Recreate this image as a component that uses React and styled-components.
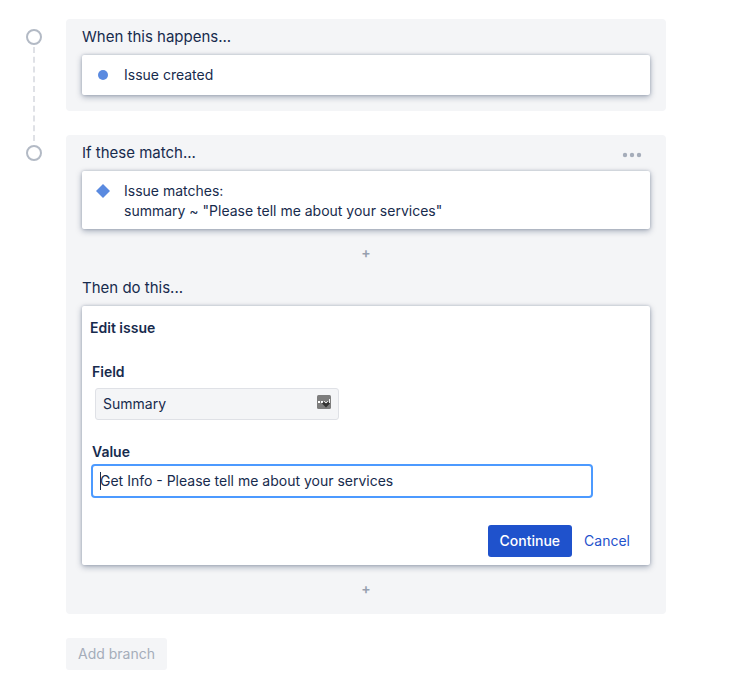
import React, { useState } from "react";
import styled, { createGlobalStyle, css } from "styled-components";

const GlobalStyle = createGlobalStyle`
  * {
    box-sizing: border-box;
  }
  body {
    margin: 0;
    background: #fff;
    color: #172b4d;
    font-family: Inter, "Liberation Sans", sans-serif;
    font-size: 14px;
    line-height: 20px;
  }
  button,
  input,
  select {
    font: inherit;
    color: inherit;
  }
`;

const Page = styled.main`
  padding: 19px 74px 15px 26px;
`;

const Step = styled.section`
  display: flex;
  gap: 24px;
  padding-bottom: 24px;
`;

const Rail = styled.div`
  width: 16px;
  flex: none;
  display: flex;
  flex-direction: column;
  align-items: center;
  gap: 2px;
  padding-top: 10px;
`;

const Marker = styled.span`
  width: 16px;
  height: 16px;
  border: 2px solid #b3bac5;
  border-radius: 50%;
`;

/* runs over the gap below the step, up to the next marker */
const Connector = styled.span`
  flex: 1;
  margin-bottom: -30px;
  border-left: 2px dashed #dfe1e6;
`;

const Panel = styled.div`
  flex: 1;
  min-width: 0;
  padding: 8px 16px 16px;
  background: #f4f5f7;
  border-radius: 4px;
  ${({ $open }) =>
    $open &&
    css`
      padding-bottom: 0;
    `}
`;

const PanelHeader = styled.header`
  display: flex;
  align-items: center;
  justify-content: space-between;
  margin-bottom: 8px;
`;

const PanelTitle = styled.h2`
  margin: 0;
  font-size: 15px;
  line-height: 20px;
  font-weight: 400;
`;

const MoreButton = styled.button`
  display: flex;
  height: 20px;
  padding: 4px 8px 0;
  border: 0;
  background: none;
  cursor: pointer;
`;

const Card = styled.div`
  background: #fff;
  border-radius: 2px;
  box-shadow: 0 2px 6px rgba(9, 30, 66, 0.34), 0 0 3px rgba(9, 30, 66, 0.2);
`;

const RuleCard = styled(Card)`
  display: flex;
  gap: 14px;
  min-height: 40px;
  padding: 10px 14px 8px;
  p {
    margin: 0;
  }
  svg {
    flex: none;
    margin-top: 3px;
  }
`;

const AddButton = styled.button`
  display: block;
  width: 24px;
  height: 24px;
  margin: 14px auto 11px;
  padding: 0 0 4px;
  border: 0;
  background: none;
  color: #97a0af;
  font-weight: 600;
  cursor: pointer;
`;

const FormCard = styled(Card)`
  padding: 12px 8px 8px;
`;

const FormTitle = styled.h3`
  margin: 0 0 24px;
  font-size: 14px;
  line-height: 20px;
  font-weight: 600;
`;

const Label = styled.label`
  display: block;
  margin-left: 2px;
  font-weight: 600;
`;

const SelectBox = styled.div`
  position: relative;
  width: 244px;
  max-width: 100%;
  margin: 6px 0 22px 5px;
  svg {
    position: absolute;
    top: 7px;
    right: 8px;
    pointer-events: none;
  }
`;

const Select = styled.select`
  display: block;
  width: 100%;
  height: 32px;
  padding: 0 32px 0 7px;
  border: 1px solid #dfe1e6;
  border-radius: 3px;
  background: #f4f5f7;
  appearance: none;
`;

const InputBox = styled.div`
  position: relative;
  margin: 2px 49px 27px 1px;
  &::before {
    content: "";
    position: absolute;
    top: 8px;
    left: 9px;
    width: 1px;
    height: 18px;
    background: #172b4d;
  }
`;

const Input = styled.input`
  display: block;
  width: 100%;
  height: 34px;
  padding: 0 7px 2px;
  border: 2px solid #4c9aff;
  border-radius: 4px;
  background: #fff;
  outline: none;
  caret-color: transparent;
`;

const Actions = styled.div`
  display: flex;
  justify-content: flex-end;
`;

const Button = styled.button`
  height: 32px;
  padding: 0 12px;
  border: 0;
  border-radius: 3px;
  background: #f4f5f7;
  color: #a5adba;
  cursor: pointer;
  ${({ $variant }) =>
    $variant === "primary" &&
    css`
      background: #1f52cc;
      color: #fff;
      font-weight: 500;
    `}
  ${({ $variant }) =>
    $variant === "link" &&
    css`
      background: none;
      color: #1f52cc;
    `}
`;

const BranchRow = styled.div`
  padding-left: 40px;
`;

function DotIcon() {
  return (
    <svg width="14" height="14" viewBox="0 0 14 14">
      <circle cx="7" cy="7" r="5" fill="#5a8ae0" />
    </svg>
  );
}

function DiamondIcon() {
  return (
    <svg width="14" height="14" viewBox="0 0 14 14">
      <path d="M7 0l7 7-7 7-7-7z" fill="#5a8ae0" />
    </svg>
  );
}

function MoreIcon() {
  return (
    <svg width="20" height="16" viewBox="0 0 20 16" fill="#a5adba">
      <circle cx="3" cy="8" r="2.2" />
      <circle cx="10" cy="8" r="2.2" />
      <circle cx="17" cy="8" r="2.2" />
    </svg>
  );
}

function PickerIcon() {
  return (
    <svg width="14" height="14" viewBox="0 0 14 14">
      <rect width="14" height="14" rx="1.5" fill="#7d7d7d" />
      <path d="M1 6h2v2H1zM4 6h2v2H4z" fill="#fff" />
      <path d="M6 7.5l3 3 3-3" fill="none" stroke="#333" strokeWidth="2.8" />
      <path d="M7 6.2l2 1.8 2-1.8M12.5 4v4" fill="none" stroke="#eee" strokeWidth="1" />
    </svg>
  );
}

function EditIssueForm() {
  const [value, setValue] = useState("Get Info - Please tell me about your services");

  return (
    <FormCard as="form" onSubmit={(e) => e.preventDefault()}>
      <FormTitle>Edit issue</FormTitle>
      <Label htmlFor="field">Field</Label>
      <SelectBox>
        <Select id="field" defaultValue="summary">
          <option value="summary">Summary</option>
        </Select>
        <PickerIcon />
      </SelectBox>
      <Label htmlFor="value">Value</Label>
      <InputBox>
        <Input id="value" value={value} onChange={(e) => setValue(e.target.value)} />
      </InputBox>
      <Actions>
        <Button $variant="primary" type="submit">
          Continue
        </Button>
        <Button $variant="link" type="button">
          Cancel
        </Button>
      </Actions>
    </FormCard>
  );
}

function App() {
  return (
    <>
      <GlobalStyle />
      <Page>
        <Step>
          <Rail>
            <Marker />
            <Connector />
          </Rail>
          <Panel>
            <PanelHeader>
              <PanelTitle>When this happens...</PanelTitle>
            </PanelHeader>
            <RuleCard>
              <DotIcon />
              <p>Issue created</p>
            </RuleCard>
          </Panel>
        </Step>
        <Step>
          <Rail>
            <Marker />
          </Rail>
          <Panel $open>
            <PanelHeader>
              <PanelTitle>If these match...</PanelTitle>
              <MoreButton type="button" aria-label="More actions">
                <MoreIcon />
              </MoreButton>
            </PanelHeader>
            <RuleCard>
              <DiamondIcon />
              <p>
                Issue matches:
                <br />
                summary ~ "Please tell me about your services"
              </p>
            </RuleCard>
            <AddButton type="button">+</AddButton>
            <PanelHeader>
              <PanelTitle>Then do this...</PanelTitle>
            </PanelHeader>
            <EditIssueForm />
            <AddButton type="button">+</AddButton>
          </Panel>
        </Step>
        <BranchRow>
          <Button type="button">Add branch</Button>
        </BranchRow>
      </Page>
    </>
  );
}

export default App;
